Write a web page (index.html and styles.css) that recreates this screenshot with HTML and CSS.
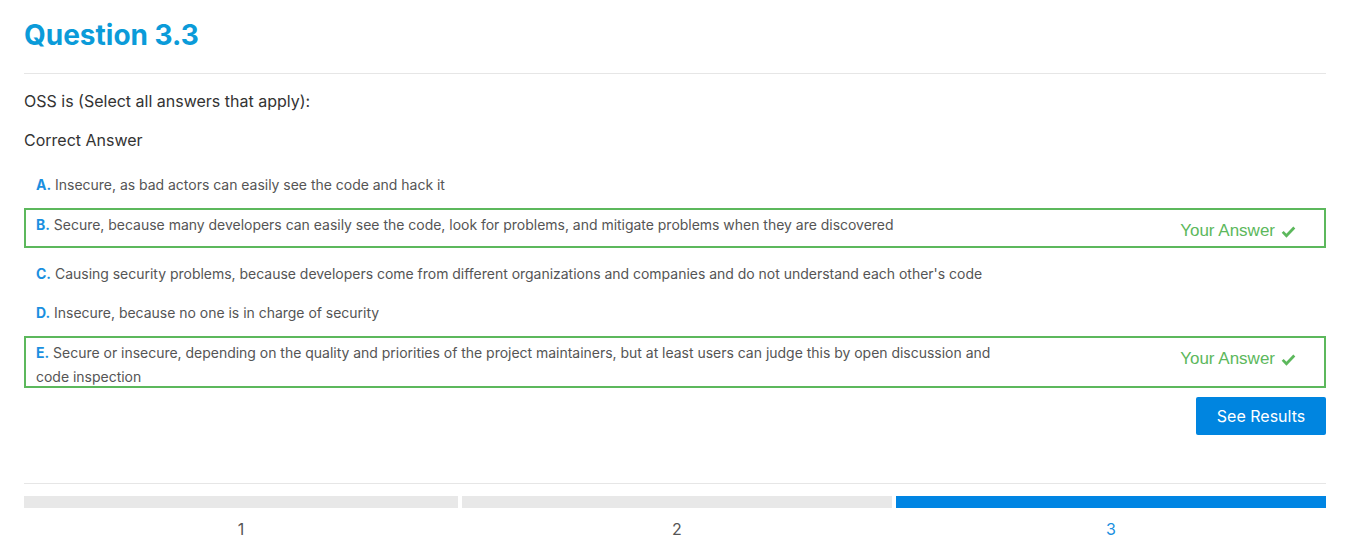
FILE: index.html
```html
<!DOCTYPE html>
<html>
<head>
<meta charset="utf-8">
<link rel="stylesheet" href="styles.css">
</head>
<body>
<div class="page">
  <h1 class="title">Question 3.3</h1>
  <hr class="rule">
  <p class="prompt">OSS is (Select all answers that apply):</p>
  <p class="label">Correct Answer</p>
  <div class="options">
    <div class="opt"><div class="opt-text"><span class="key">A.</span> Insecure, as bad actors can easily see the code and hack it</div></div>
    <div class="opt chosen"><div class="opt-text"><span class="key">B.</span> Secure, because many developers can easily see the code, look for problems, and mitigate problems when they are discovered</div><div class="yours">Your Answer <svg class="check" viewBox="0 0 16 16" width="15" height="15"><path d="M1.8 8.4l4 4 8.4-8.6" fill="none" stroke="currentColor" stroke-width="3"/></svg></div></div>
    <div class="opt"><div class="opt-text"><span class="key">C.</span> Causing security problems, because developers come from different organizations and companies and do not understand each other's code</div></div>
    <div class="opt"><div class="opt-text"><span class="key">D.</span> Insecure, because no one is in charge of security</div></div>
    <div class="opt chosen"><div class="opt-text"><span class="key">E.</span> Secure or insecure, depending on the quality and priorities of the project maintainers, but at least users can judge this by open discussion and code inspection</div><div class="yours">Your Answer <svg class="check" viewBox="0 0 16 16" width="15" height="15"><path d="M1.8 8.4l4 4 8.4-8.6" fill="none" stroke="currentColor" stroke-width="3"/></svg></div></div>
  </div>
  <div class="actions"><button class="btn">See Results</button></div>
  <hr class="rule rule2">
  <div class="steps">
    <div class="step first"><div class="bar"></div><div class="num">1</div></div>
    <div class="step"><div class="bar"></div><div class="num">2</div></div>
    <div class="step active"><div class="bar"></div><div class="num">3</div></div>
  </div>
</div>
</body>
</html>
```
FILE: styles.css
```css
html, body { margin: 0; padding: 0; background: #fff; }
body { font-family: Inter, "Noto Sans", sans-serif; color: #333; }
.page { padding: 16px 20px 0 24px; }
.title { margin: 0; font-size: 28px; font-weight: 700; color: #0b9bd9; line-height: 38px; }
.rule { border: 0; border-top: 1px solid #e6e6e6; margin: 19px 0 0; }
.prompt { margin: 16px 0 0; font-size: 16px; line-height: 22px; color: #333; }
.label { margin: 17px 0 0; font-size: 16px; line-height: 22px; color: #333; }
.options { margin-top: 17px; display: flex; flex-direction: column; gap: 11px; }
.opt { display: flex; align-items: flex-start; border: 2px solid transparent; padding: 3px 28px 0 10px; font-size: 14px; line-height: 24px; color: #555; letter-spacing: -0.02px; }
.opt-text { flex: 1; max-width: 970px; margin-bottom: -3px; }
.chosen { border-color: #5cb85c; min-height: 33px; margin-top: 1px; margin-bottom: -2px; }
.key { color: #1a8fe0; font-weight: 700; letter-spacing: 0; }
.yours { margin-left: auto; font-family: "Liberation Sans", Arial, sans-serif; font-size: 17px; color: #5cb85c; line-height: 20px; padding-top: 8px; display: flex; align-items: center; gap: 6px; white-space: nowrap; letter-spacing: 0; }
.check { display: block; }
.actions { display: flex; justify-content: flex-end; margin-top: 11px; }
.btn { background: #0085e0; color: #fff; border: 0; border-radius: 2px; font-family: Inter, sans-serif; font-size: 16px; width: 130px; height: 38px; padding: 0; }
.rule2 { margin-top: 48px; }
.steps { display: flex; gap: 4px; margin-top: 12px; }
.step { flex: 1 1 430px; display: flex; flex-direction: column; align-items: center; }
.step.first { flex-basis: 434px; }
.bar { width: 100%; height: 12px; background: #e8e8e8; }
.active .bar { background: #0085e3; }
.num { margin-top: 10px; font-size: 16px; line-height: 22px; color: #555; }
.active .num { color: #1a8fe0; }
```
